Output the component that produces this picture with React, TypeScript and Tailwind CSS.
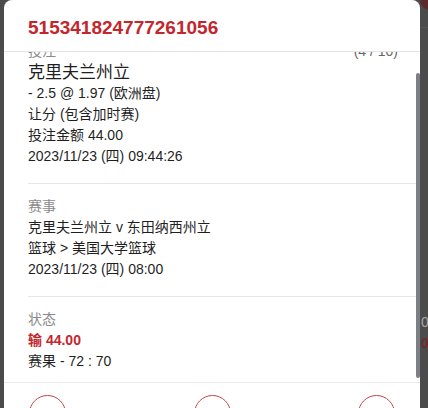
const font = "font-['Liberation_Sans','Noto_Sans_CJK_SC',sans-serif]";

function Line({ children, className = '' }: { children: React.ReactNode; className?: string }) {
  return <div className={`h-[21px] leading-[21px] text-[14px] whitespace-nowrap ${className}`}>{children}</div>;
}

export default function App() {
  return (
    <div className={`relative w-[428px] h-[408px] overflow-hidden bg-[#4b4b4b] flex ${font}`}>
      <div className="w-[4px] shrink-0" />

      <div className="w-[416px] shrink-0 bg-white rounded-t-lg flex flex-col">
        <div className="h-[52px] shrink-0 border-b border-[#e4e4e4] px-6 pt-[17px]">
          <div className="text-[19px] leading-[22px] font-bold text-[#c4262e]">515341824777261056</div>
        </div>

        <div className="relative h-[330px] shrink-0 overflow-hidden">
          <div className="-mt-[23px] pr-[4px] text-[#1f1f1f]">
            <div className="ml-6 pr-[18px] pt-3 pb-4 border-b border-[#e6e6e6]">
              <div className="flex justify-between">
                <Line className="text-[#8a8a8a]">投注</Line>
                <Line className="text-[#666]">(4 / 10)</Line>
              </div>
              <div className="h-[21px] leading-[21px] text-[17px]">克里夫兰州立</div>
              <Line>- 2.5 @ 1.97 (欧洲盘)</Line>
              <Line>让分 (包含加时赛)</Line>
              <Line>投注金额 44.00</Line>
              <Line>2023/11/23 (四) 09:44:26</Line>
            </div>

            <div className="ml-6 pr-[18px] pt-3 pb-4 border-b border-[#e6e6e6]">
              <Line className="text-[#8a8a8a]">赛事</Line>
              <Line>克里夫兰州立 v 东田纳西州立</Line>
              <Line>篮球 &gt; 美国大学篮球</Line>
              <Line>2023/11/23 (四) 08:00</Line>
            </div>

            <div className="ml-6 pr-[18px] pt-3 pb-4">
              <Line className="text-[#8a8a8a]">状态</Line>
              <Line className="font-bold text-[#c4262e]">输 44.00</Line>
              <Line>赛果 - 72 : 70</Line>
            </div>
          </div>

          <div className="absolute right-0 top-[21px] w-[4px] h-[305px] bg-[#7c7f84] rounded-sm" />
        </div>

        <div className="flex-1 border-t border-[#ececec] pt-[12px] px-[25px] flex justify-between items-start">
          <div className="w-[37px] h-[37px] rounded-full border border-[#c4464c]" />
          <div className="w-[37px] h-[37px] rounded-full border border-[#c4464c]" />
          <div className="w-[37px] h-[37px] rounded-full border border-[#c4464c]" />
        </div>
      </div>

      <div className="flex-1 flex flex-col">
        <div className="h-[10px] w-[10px] ml-auto rounded-bl-full bg-[#5a2a2c]" />
        <div className="mt-[17px] h-px bg-[#555]" />
        <div className="mt-[284px] pl-[1px] text-[14px] leading-[21px] text-[#a8a8a8]">0</div>
        <div className="pl-[1px] text-[14px] leading-[21px] text-[#6e2b2f] font-bold">0</div>
      </div>
    </div>
  );
}
